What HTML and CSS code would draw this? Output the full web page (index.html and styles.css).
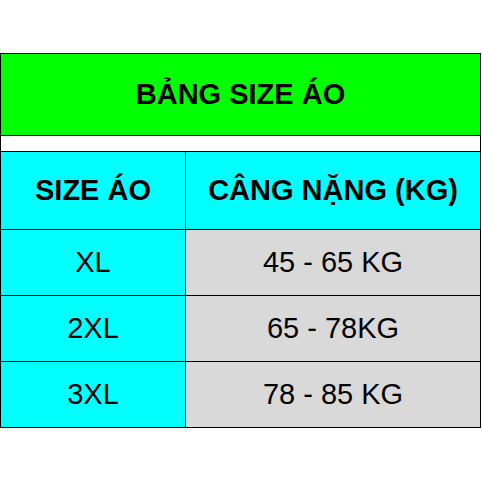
FILE: index.html
```html
<!DOCTYPE html>
<html>
<head>
<meta charset="utf-8">
<link rel="stylesheet" href="styles.css">
</head>
<body>
<div class="sheet">
  <div class="row title">BẢNG SIZE ÁO</div>
  <div class="row gap"></div>
  <div class="row grid head">
    <div class="cell size">SIZE ÁO</div>
    <div class="cell weight">CÂNG NẶNG (KG)</div>
  </div>
  <div class="row grid body">
    <div class="cell size">XL</div>
    <div class="cell weight">45 - 65 KG</div>
  </div>
  <div class="row grid body">
    <div class="cell size">2XL</div>
    <div class="cell weight">65 - 78KG</div>
  </div>
  <div class="row grid body">
    <div class="cell size">3XL</div>
    <div class="cell weight">78 - 85 KG</div>
  </div>
</div>
</body>
</html>
```
FILE: styles.css
```css
html, body {
  margin: 0;
  padding: 0;
  background: #ffffff;
}
body {
  font-family: "Liberation Sans", Arial, sans-serif;
  color: #000;
}
.sheet {
  margin-top: 53px;
  width: 479px;
  border: 1px solid #000;
}
.row {
  border-top: 1px solid #000;
}
.row:first-child {
  border-top: none;
}
.title {
  height: 81px;
  background: #00ff00;
  display: flex;
  align-items: center;
  justify-content: center;
  font-weight: bold;
  font-size: 29px;
}
.gap {
  height: 15px;
  background: #ffffff;
}
.grid {
  display: grid;
  grid-template-columns: 184px 1fr;
}
.head {
  height: 77px;
}
.body {
  height: 65px;
}
.cell {
  display: flex;
  align-items: center;
  justify-content: center;
  font-size: 29px;
}
.head .cell {
  font-weight: bold;
}
.size {
  background: #00ffff;
}
.weight {
  border-left: 1px solid #000;
  background: #d9d9d9;
}
.head .weight {
  background: #00ffff;
}
```
